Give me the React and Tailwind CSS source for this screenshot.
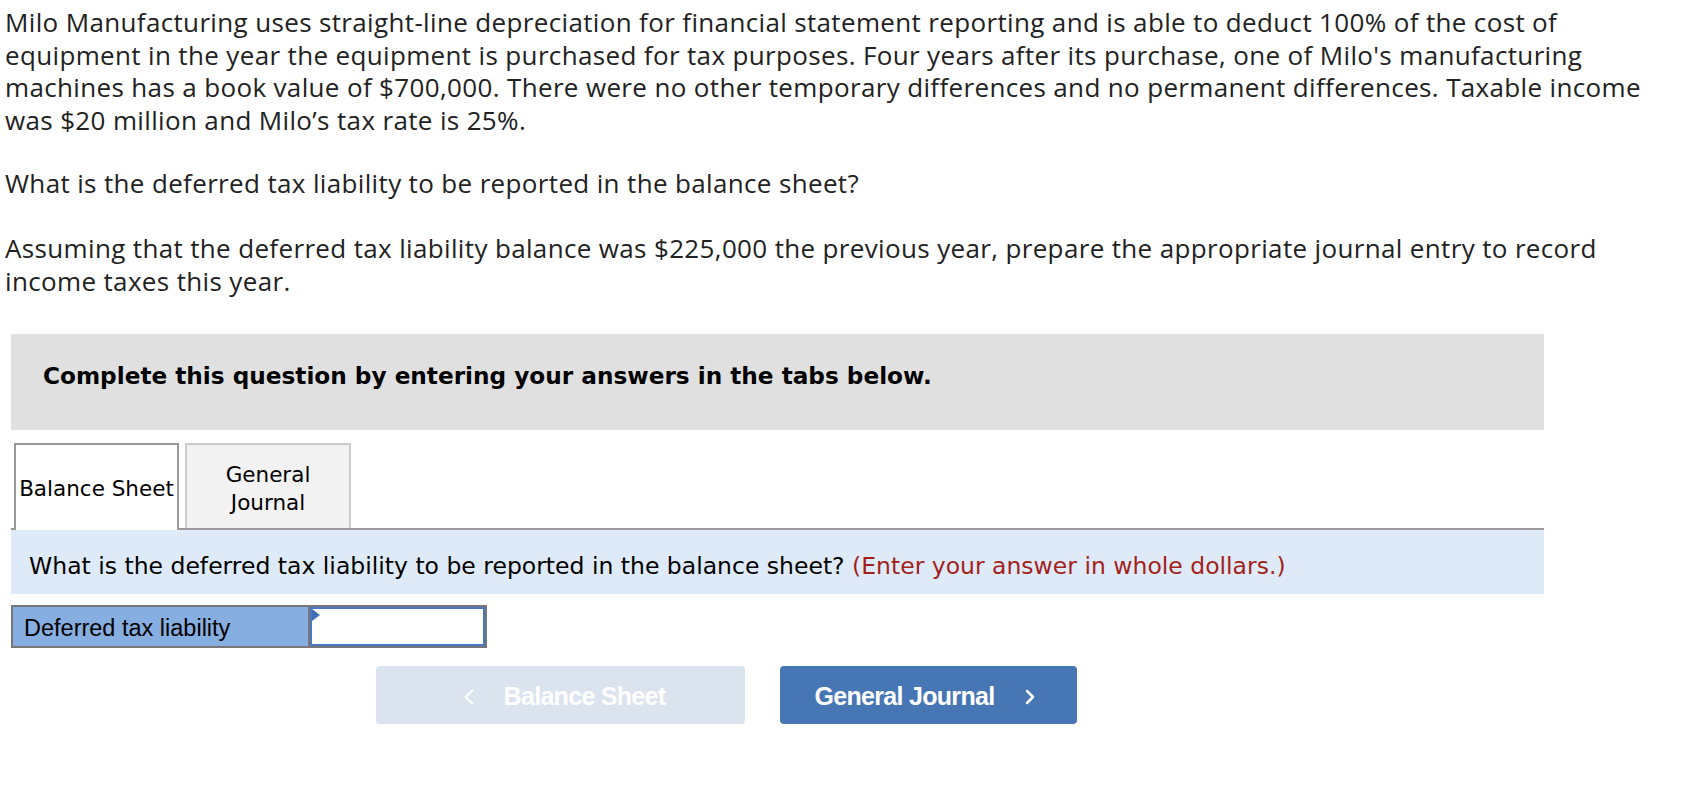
import { ChevronLeft, ChevronRight } from 'lucide-react';

const body = { fontFamily: '"Open Sans", Lato, sans-serif' };
const verdana = { fontFamily: '"DejaVu Sans", Verdana, sans-serif' };
const arial = { fontFamily: '"Liberation Sans", Arial, sans-serif' };

export default function App() {
    return (
        <div className="min-h-screen bg-white pt-[6px] text-[#222]">
            <Question />
            <div className="ml-[11px] mt-[37px] w-[1533px]">
                <Banner />
                <Tabs />
                <Instruction />
                <AnswerRow />
                <Nav />
            </div>
        </div>
    );
}

function Question() {
    return (
        <div className="px-[5px] text-[26px] leading-[32.6px] tracking-[0.35px]" style={body}>
            <p>
                Milo Manufacturing uses straight-line depreciation for financial statement reporting and is able to deduct 100% of the cost of
                <br />
                equipment in the year the equipment is purchased for tax purposes. Four years after its purchase, one of Milo's manufacturing
                <br />
                machines has a book value of $700,000. There were no other temporary differences and no permanent differences. Taxable income
                <br />
                was $20 million and Milo’s tax rate is 25%.
            </p>
            <p className="mt-[31px]">What is the deferred tax liability to be reported in the balance sheet?</p>
            <p className="mt-[32px]">
                Assuming that the deferred tax liability balance was $225,000 the previous year, prepare the appropriate journal entry to record
                <br />
                income taxes this year.
            </p>
        </div>
    );
}

function Banner() {
    return (
        <div className="h-[96px] bg-[#e0e0e0] pl-[32px] pt-[28px] text-[23.2px] font-bold leading-[28px] text-black" style={verdana}>
            Complete this question by entering your answers in the tabs below.
        </div>
    );
}

function Tabs() {
    return (
        <div className="mt-[13px] flex h-[87px] items-end border-b-2 border-[#999] pl-[3px]" style={verdana}>
            <div className="-mb-[2px] flex h-[87px] w-[165px] items-center justify-center border-2 border-b-0 border-[#999] bg-white pt-[2px] text-[21.5px] leading-[26px] text-black">
                Balance Sheet
            </div>
            <div className="ml-[6px] flex h-[85px] w-[166px] items-center justify-center border-2 border-b-0 border-[#ccc] bg-[#f2f2f2] pt-[4px] text-center text-[21.5px] leading-[28px] text-black">
                General
                <br />
                Journal
            </div>
        </div>
    );
}

function Instruction() {
    return (
        <div className="flex h-[64px] items-center bg-[#deeaf7] pl-[18px] pt-[8px] text-[23.5px] text-black" style={verdana}>
            What is the deferred tax liability to be reported in the balance sheet?&nbsp;
            <span className="text-[#a31f1c]">(Enter your answer in whole dollars.)</span>
        </div>
    );
}

function AnswerRow() {
    return (
        <div className="mt-[11px] flex h-[43px]" style={arial}>
            <div className="flex w-[297px] items-center border-2 border-r-0 border-[#777] bg-[#86aee0] pl-[11px] pt-[3px] text-[23.5px] text-black">
                Deferred tax liability
            </div>
            <div className="relative w-[179px] border-2 border-[#777] bg-white">
                <div className="h-full w-full border-2 border-[#4a78c0]" />
                <svg className="absolute left-[2px] top-[2px]" width="8" height="12" viewBox="0 0 8 12">
                    <polygon points="0,0 8,6 0,12" fill="#3f6fb8" />
                </svg>
            </div>
        </div>
    );
}

function Nav() {
    return (
        <div className="mt-[18px] flex gap-[35px] pl-[365px] text-[25px] font-bold tracking-[-0.7px] text-white" style={arial}>
            <div className="flex h-[58px] w-[369px] items-center justify-center gap-[22px] rounded-[4px] bg-[#dae3ee] pt-[3px]">
                <ChevronLeft size={26} strokeWidth={2} />
                <span>Balance Sheet</span>
            </div>
            <div className="flex h-[58px] w-[297px] items-center justify-center gap-[24px] rounded-[4px] bg-[#4676b4] pt-[3px]">
                <span>General Journal</span>
                <ChevronRight size={24} strokeWidth={2.5} />
            </div>
        </div>
    );
}
